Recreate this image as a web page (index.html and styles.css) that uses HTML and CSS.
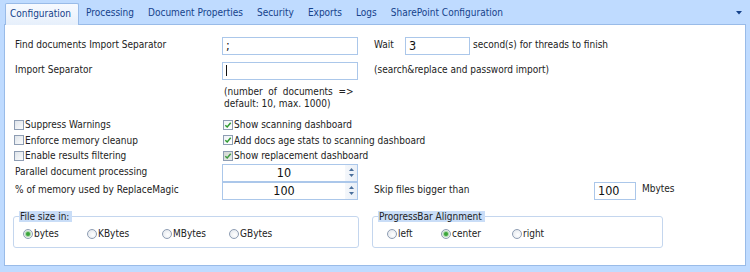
FILE: index.html
```html
<!DOCTYPE html>
<html>
<head>
<meta charset="utf-8">
<title>Configuration</title>
<link rel="stylesheet" href="styles.css">
</head>
<body>
<div class="tabs">
  <div class="tab active">Configuration</div>
  <div class="tab">Processing</div>
  <div class="tab">Document Properties</div>
  <div class="tab">Security</div>
  <div class="tab">Exports</div>
  <div class="tab">Logs</div>
  <div class="tab">SharePoint Configuration</div>
  <div class="tab-menu"><svg width="6" height="4" viewBox="0 0 6 4"><path d="M0 0H6L3 3.5Z" fill="#15428b"/></svg></div>
</div>
<div class="panel">
  <div class="row">
    <span class="lbl">Find documents Import Separator</span>
    <span class="field f-main">;</span>
    <span class="wait">Wait</span>
    <span class="field f-wait">3</span>
    <span class="after">second(s) for threads to finish</span>
  </div>
  <div class="row r2">
    <span class="lbl">Import Separator</span>
    <span class="field f-main"><span class="caret"></span></span>
    <span class="hint">(search&amp;replace and password import)</span>
  </div>
  <div class="note">(number&nbsp; of&nbsp; documents&nbsp; =&gt;<br>default: 10, max. 1000)</div>
  <div class="checks">
    <label class="chk"><span class="box"></span>Suppress Warnings</label>
    <label class="chk"><span class="box on"><svg width="8" height="8" viewBox="0 0 8 8"><path d="M1.3 4.2L3.2 6L6.7 1.8" fill="none" stroke="#2f9a2f" stroke-width="1.5"/></svg></span>Show scanning dashboard</label>
    <label class="chk"><span class="box"></span>Enforce memory cleanup</label>
    <label class="chk"><span class="box on"><svg width="8" height="8" viewBox="0 0 8 8"><path d="M1.3 4.2L3.2 6L6.7 1.8" fill="none" stroke="#2f9a2f" stroke-width="1.5"/></svg></span>Add docs age stats to scanning dashboard</label>
    <label class="chk"><span class="box"></span>Enable results filtering</label>
    <label class="chk"><span class="box on dim"><svg width="8" height="8" viewBox="0 0 8 8"><path d="M1.3 4.2L3.2 6L6.7 1.8" fill="none" stroke="#3f9a3f" stroke-width="1.5"/></svg></span>Show replacement dashboard</label>
  </div>
  <div class="row">
    <span class="lbl">Parallel document processing</span>
    <span class="field f-main spin"><span class="val">10</span><span class="btns"><svg width="5" height="3" viewBox="0 0 5 3"><path d="M0 3H5L2.5 0Z" fill="#4a6f9c"/></svg><svg width="5" height="3" viewBox="0 0 5 3"><path d="M0 0H5L2.5 3Z" fill="#4a6f9c"/></svg></span></span>
  </div>
  <div class="row">
    <span class="lbl">% of memory used by ReplaceMagic</span>
    <span class="field f-main spin"><span class="val">100</span><span class="btns"><svg width="5" height="3" viewBox="0 0 5 3"><path d="M0 3H5L2.5 0Z" fill="#4a6f9c"/></svg><svg width="5" height="3" viewBox="0 0 5 3"><path d="M0 0H5L2.5 3Z" fill="#4a6f9c"/></svg></span></span>
    <span class="skip">Skip files bigger than</span>
    <span class="field f-skip">100</span>
    <span class="mb">Mbytes</span>
  </div>
  <div class="groups">
    <fieldset class="grp g1">
      <legend>File size in:</legend>
      <div class="radios r-size">
        <label class="rad"><span class="dot on"></span>bytes</label>
        <label class="rad"><span class="dot"></span>KBytes</label>
        <label class="rad"><span class="dot"></span>MBytes</label>
        <label class="rad"><span class="dot"></span>GBytes</label>
      </div>
    </fieldset>
    <fieldset class="grp g2">
      <legend>ProgressBar Alignment</legend>
      <div class="radios r-align">
        <label class="rad"><span class="dot"></span>left</label>
        <label class="rad"><span class="dot on"></span>center</label>
        <label class="rad"><span class="dot"></span>right</label>
      </div>
    </fieldset>
  </div>
</div>
</body>
</html>
```

FILE: styles.css
```css
html, body {
  margin: 0;
  padding: 0;
}
body {
  width: 750px;
  height: 272px;
  overflow: hidden;
  background: #bfdbff;
  font-family: "DejaVu Sans Condensed", "Liberation Sans", sans-serif;
  font-stretch: condensed;
  font-size: 10px;
  color: #222;
}

/* tab strip */
.tabs {
  display: flex;
  align-items: flex-end;
  height: 24px;
  padding-left: 5px;
  position: relative;
  z-index: 1;
}
.tab {
  height: 20px;
  line-height: 18px;
  padding: 0 7px;
  color: #15428b;
  white-space: nowrap;
}
.tab.active {
  box-sizing: border-box;
  width: 74px;
  height: 22px;
  line-height: 19px;
  padding: 0 0 0 4px;
  margin-bottom: -1px;
  border: 1px solid #99bbe8;
  border-bottom: none;
  border-radius: 2px 2px 0 0;
  background: linear-gradient(#f7faff, #e6effb);
}
.tab-menu {
  margin-left: auto;
  margin-right: 8px;
  align-self: center;
  height: 4px;
  display: flex;
  margin-top: 2px;
}

/* main panel */
.panel {
  box-sizing: border-box;
  margin: 0 4px;
  height: 242px;
  border: 1px solid #99bbe8;
  background: #fff;
  padding: 12px 0 0 10px;
}
.row {
  display: flex;
  align-items: center;
  height: 18px;
  white-space: nowrap;
}
.r2 { margin-top: 7px; }
.lbl, .wait, .after, .hint, .skip {
  margin-top: -3px;
}
.lbl { width: 207px; }
.field {
  box-sizing: border-box;
  height: 18px;
  border: 1px solid #abc7ea;
  padding-left: 3px;
  line-height: 16px;
  font-size: 12.5px;
  color: #111;
  background: #fff;
}
.f-main { width: 136px; }
.f-wait { width: 65px; }
.f-skip { width: 42px; }
.wait { margin-left: 16px; width: 31px; }
.after { margin-left: 3px; }
.hint { margin-left: 16px; }
.caret {
  display: inline-block;
  width: 1px;
  height: 11px;
  background: #111;
  vertical-align: -1px;
}
.note {
  margin: 6px 0 0 209px;
  line-height: 12px;
}

/* checkboxes */
.checks {
  margin: 7px 0 0 -1px;
  display: grid;
  grid-template-columns: 209px auto;
  grid-auto-rows: 15.5px;
  align-items: center;
  white-space: nowrap;
}
.chk {
  display: flex;
  align-items: center;
}
.box {
  box-sizing: border-box;
  width: 10px;
  height: 10px;
  margin-right: 1px;
  border: 1px solid #8e9db3;
  background: linear-gradient(135deg, #dfe4ea, #fbfcfd);
  display: flex;
  align-items: center;
  justify-content: center;
}
.box.on { background: linear-gradient(135deg, #eef2f6, #ffffff); }
.box.dim { background: linear-gradient(135deg, #d2d7d2, #e8ebe8); }

/* spin boxes */
.spin {
  display: flex;
  padding-left: 0;
}
.spin .val {
  flex: 1;
  text-align: center;
}
.spin .btns {
  width: 12px;
  display: flex;
  flex-direction: column;
  align-items: center;
  justify-content: center;
  gap: 3px;
  background: linear-gradient(90deg, #f4f7fb, #e9eff7);
}
.skip { margin-left: 16px; width: 220px; }
.mb { margin-left: 6px; align-self: flex-start; line-height: 14px; }

/* group boxes */
.groups {
  display: flex;
  margin: 11px 0 0 -2px;
}
.grp {
  box-sizing: border-box;
  margin: 0;
  padding: 0;
  border: 1px solid #c4d6ee;
  border-radius: 3px;
  min-width: 0;
}
.g1 { width: 346px; margin-right: 13px; }
.g2 { width: 291px; }
.grp legend {
  margin-left: 5px;
  padding: 0 3px 0 1px;
  line-height: 11px;
  background: #c9ddf7;
  color: #222;
}
.radios {
  display: grid;
  align-items: center;
  height: 14px;
  padding: 5px 0 6px 9px;
  white-space: nowrap;
}
.r-size { grid-template-columns: 64px 75px 67px auto; }
.r-align { grid-template-columns: 54px 71px auto; padding-left: 14px; }
.rad {
  display: flex;
  align-items: center;
}
.dot {
  box-sizing: border-box;
  width: 10px;
  height: 10px;
  margin-right: 1px;
  border: 1px solid #8e9db3;
  border-radius: 50%;
  background: radial-gradient(circle at 60% 60%, #ffffff, #dfe4ea);
  display: flex;
  align-items: center;
  justify-content: center;
}
.dot.on::after {
  content: "";
  width: 4px;
  height: 4px;
  border-radius: 50%;
  background: #3aa53a;
  box-shadow: 0 0 1px 1px #9fd39f;
}
```
